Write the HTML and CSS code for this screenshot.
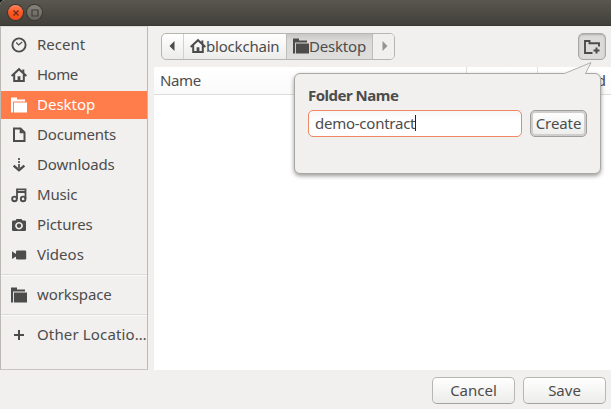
FILE: index.html
```
<!DOCTYPE html>
<html lang="en">
<head>
<meta charset="utf-8">
<title>Save</title>
<link rel="stylesheet" href="styles.css">
</head>
<body>
<svg class="defs" aria-hidden="true">
  <symbol id="home" viewBox="0 0 16 16"><path d="M.6 9 8 2.200 15.400 9M3.200 7.500v6.400h9.600V7.500" fill="none" stroke="currentColor" stroke-width="2"/><path d="M6.600 9.300h2.800V14H6.600zM11.300 2.500h2v4l-2-1.700z" fill="currentColor"/></symbol>
  <symbol id="folder" viewBox="0 0 16 16"><path d="M0 .5h6v2h8V4.500H2.100v11H0zM3 5.500h13v10H3z" fill="currentColor"/></symbol>
</svg>
<div class="window">
  <header class="titlebar">
    <span class="wm close"><svg width="8" height="8" viewBox="0 0 8 8"><path d="m1.500 1.500 5 5m0-5-5 5" stroke="#702c1c" stroke-width="1.400"/></svg></span>
    <span class="wm max"><svg width="8" height="8" viewBox="0 0 8 8"><path d="M1 1h6v6H1z" fill="none" stroke="#403f3a" stroke-width="1.200"/></svg></span>
  </header>
  <div class="body">
    <nav class="sidebar">
      <div class="place"><svg class="ic" viewBox="0 0 16 16"><circle cx="8" cy="8" r="6.600" fill="none" stroke="currentColor" stroke-width="1.900"/><path d="M5.200 5.500 7.700 8l3.500-3" fill="none" stroke="currentColor" stroke-width="1.200"/></svg><span>Recent</span></div>
      <div class="place"><svg class="ic"><use href="#home"/></svg><span class="t-home">Home</span></div>
      <div class="place active"><svg class="ic"><use href="#folder"/></svg><span>Desktop</span></div>
      <div class="place"><svg class="ic" viewBox="0 0 16 16"><path d="M3 1.500h6.500l4 4v8.600H3z" fill="none" stroke="currentColor" stroke-width="2"/><path d="M8.700 1.500v4.800h4.800z" fill="currentColor"/></svg><span class="t-documents">Documents</span></div>
      <div class="place"><svg class="ic" viewBox="0 0 16 16"><path d="M8 1v2M8 4v2M8 7v4" stroke="currentColor" stroke-width="1.700"/><path d="m2.600 8.600 5.400 4.600 5.400-4.600" fill="none" stroke="currentColor" stroke-width="2.400"/></svg><span class="t-downloads">Downloads</span></div>
      <div class="place"><svg class="ic" viewBox="0 0 16 16"><path d="M6 12V2.300h8.500V12M6 5h8.500" fill="none" stroke="currentColor" stroke-width="1.800"/><circle cx="3.500" cy="11.900" r="2.300" fill="none" stroke="currentColor" stroke-width="1.900"/><circle cx="12.100" cy="11.900" r="2.300" fill="none" stroke="currentColor" stroke-width="1.900"/></svg><span class="t-music">Music</span></div>
      <div class="place"><svg class="ic" viewBox="0 0 16 16"><path fill-rule="evenodd" d="M2.300 3.500H4.500L5.500 2h5l1 1.500h2.200q1.300 0 1.300 1.300v7.900q0 1.300-1.300 1.300H2.300Q1 14 1 12.700V4.800Q1 3.500 2.300 3.500zM8 4.900a3.800 3.800 0 1 0 .01 0zM8 6.500a2.200 2.200 0 1 1-.01 0z" fill="currentColor"/></svg><span class="t-pictures">Pictures</span></div>
      <div class="place"><svg class="ic" viewBox="0 0 16 16"><rect x="5" y="3.500" width="10.200" height="9" rx="1.200" fill="currentColor"/><path d="M1 4.300 5 7v2.500L1 12z" fill="currentColor"/></svg><span>Videos</span></div>
      <hr>
      <div class="place"><svg class="ic"><use href="#folder"/></svg><span class="t-workspace">workspace</span></div>
      <hr>
      <div class="place"><svg class="ic" viewBox="0 0 16 16"><path d="M8 3v10M3 8h10" stroke="currentColor" stroke-width="2"/></svg><span class="t-other">Other Locatio…</span></div>
    </nav>
    <main class="main">
      <div class="toolbar">
        <div class="path">
          <span class="seg back"><svg width="6" height="10" viewBox="0 0 6 10"><path d="M5.500 0v10L.5 5z" fill="#4c4c4c"/></svg></span>
          <span class="seg crumb"><svg class="ic"><use href="#home"/></svg><span class="t-blockchain">blockchain</span></span>
          <span class="seg current"><svg class="ic"><use href="#folder"/></svg><span class="t-crumb">Desktop</span></span>
          <span class="seg fwd"><svg width="6" height="10" viewBox="0 0 6 10"><path d="M.5 0v10l5-5z" fill="#96948f"/></svg></span>
        </div>
        <div class="newfolder"><svg width="18" height="16" viewBox="0 0 18 16"><path d="M9.500 14H2V2h4.500v2.200H16v3.300" fill="none" stroke="#4c4c4c" stroke-width="1.900"/><path d="M13.500 8.500v6M10.500 11.500h6" stroke="#4c4c4c" stroke-width="2"/></svg></div>
      </div>
      <div class="list">
        <div class="cols"><span class="name">Name</span><span class="size"></span><span class="modified">Modified</span></div>
      </div>
    </main>
  </div>
  <footer class="actions">
    <div class="btn">Cancel</div>
    <div class="btn">Save</div>
  </footer>
  <section class="popover">
    <svg class="tip" width="32" height="13" viewBox="0 0 32 13"><path d="M1 13v-1.500L28 .600 22.500 11.500V13z" fill="#f1f0ee"/><path d="M.5 11.500h1L28 .600 22.500 11.500h1" fill="none" stroke="#b0aeaa"/></svg>
    <h1>Folder Name</h1>
    <div class="form">
      <div class="entry"><span class="t-entry">demo-contract</span><i class="caret"></i></div>
      <div class="btn create">Create</div>
    </div>
  </section>
</div>
</body>
</html>
```
FILE: styles.css
```
* { box-sizing: border-box; }
body { margin: 0; background: #111; color: #4c4c4c; font: 15px/20px "Noto Sans", "Open Sans", sans-serif; }
.defs { display: none; }
.window { position: relative; display: flex; flex-direction: column; width: 611px; height: 409px; background: #f1f0ee; overflow: hidden; white-space: nowrap; border-top-left-radius: 5px; }
.titlebar { display: flex; gap: 4px; height: 26px; padding: 5px 0 0 8px; background: linear-gradient(#59574f, #403f3a); border-bottom: 1px solid #383733; }
.wm { display: flex; align-items: center; justify-content: center; width: 15px; height: 15px; border-radius: 50%; box-shadow: 0 0 0 1px #383731; }
.close { background: linear-gradient(#ff8460, #fa5722 50%, #f04c1a); }
.max { background: linear-gradient(#85837a, #65635b); }
.body { display: flex; height: 344px; }
.sidebar { width: 148px; padding-top: 4px; border: 1px solid #bdb9b5; border-top: 1px solid #dddbd8; border-bottom-color: #c8c5c1; }
.place { display: flex; align-items: center; gap: 10px; height: 28px; margin-bottom: 2px; padding: 0 0 2px 10px; }
.place .ic { margin-top: 1px; }
.active { background: #ff7c4b; color: #fff; }
.ic { width: 16px; height: 16px; flex: none; }
.t-home { letter-spacing: -.5px; }
.t-documents, .t-music { letter-spacing: -.2px; }
.t-downloads, .t-workspace, .t-pictures { letter-spacing: -.1px; }
.t-other { letter-spacing: .15px; }
.t-blockchain { letter-spacing: -.2px; }
.t-crumb { letter-spacing: -.2px; }
.t-entry { letter-spacing: -.25px; }
hr { height: 2px; margin: 5px 0; border: 0; border-top: 1px solid #dddbd9; border-bottom: 1px solid #fafafa; }
.main { flex: 1; margin-left: 6px; display: flex; flex-direction: column; }
.toolbar { display: flex; justify-content: space-between; padding: 7px 5px 7px 7px; height: 41px; }
.path { display: flex; height: 27px; width: 234px; border: 1px solid #b7b5b2; border-radius: 5px; overflow: hidden; background: linear-gradient(#fff, #ececeb); }
.seg { display: flex; align-items: center; padding-bottom: 1px; }
.back { width: 22px; padding-left: 7px; border-right: 1px solid #d3d1ce; }
.crumb { width: 102px; padding-left: 6px; }
.current { width: 87px; padding-left: 6px; background: linear-gradient(#c8c7c6, #dad9d8 25%, #dededd); border: solid #bfbdba; border-width: 0 1px; }
.fwd { flex: 1; padding-left: 9px; background: #f1f0ee; }
.newfolder { display: flex; align-items: center; justify-content: center; width: 28px; height: 27px; border: 1px solid #aaa8a5; border-radius: 5px; background: #dcdbda; box-shadow: inset 0 1px 2px #aaa; }
.list { flex: 1; background: #fff; }
.cols { display: flex; height: 28px; line-height: 27px; background: linear-gradient(#fff, #fafafa); border-bottom: 1px solid #dddddc; }
.name { width: 313px; padding-left: 6px; border-right: 1px solid #dededd; letter-spacing: -.4px; }
.size { width: 71px; border-right: 1px solid #dededd; }
.modified { flex: 1; padding-right: 5px; text-align: right; }
.actions { display: flex; justify-content: flex-end; gap: 8px; padding: 7px 5px 0; }
.btn { display: flex; align-items: center; justify-content: center; width: 83px; height: 27px; padding-bottom: 1px; border: 1px solid #b8b6b3; border-bottom-color: #a5a3a0; border-radius: 5px; background: linear-gradient(#fff, #ececeb); }
.popover { position: absolute; left: 294px; top: 73px; width: 307px; height: 101px; padding: 11px 13px 0; border: 1px solid #aaa8a4; border-radius: 6px; background: #f1f0ee; box-shadow: 0 2px 4px rgba(0,0,0,.4); }
.tip { position: absolute; left: 268px; top: -12px; }
h1 { margin: 0 0 5px; font-size: 15px; line-height: 20px; letter-spacing: -.5px; }
.form { display: flex; gap: 8px; }
.entry { display: flex; align-items: center; width: 214px; height: 27px; padding: 0 0 1px 6px; border: 1px solid #f08763; border-radius: 5px; background: linear-gradient(#f7f7f7, #fff 40%); }
.caret { width: 1px; height: 16px; background: #222; }
.create { width: 57px; border: 1px solid #a19f9c; box-shadow: inset 0 0 0 2px #cfcecc; letter-spacing: -.1px; }
```
